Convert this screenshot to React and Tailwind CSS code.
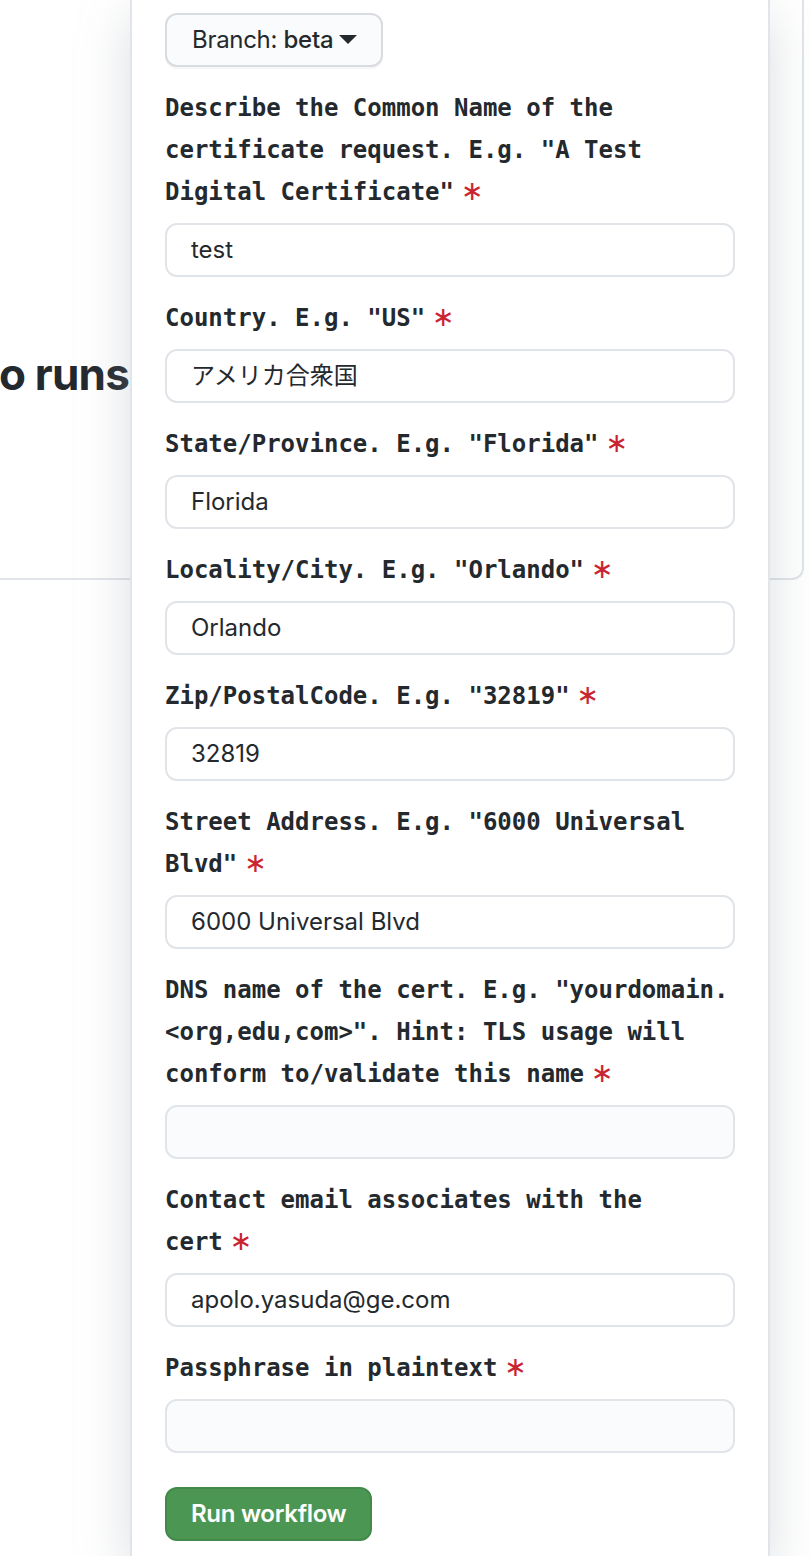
import React from 'react';

const fields = [
  { lines: ['Describe the Common Name of the', 'certificate request. E.g. "A Test', 'Digital Certificate"'], value: 'test' },
  { lines: ['Country. E.g. "US"'], value: 'アメリカ合衆国' },
  { lines: ['State/Province. E.g. "Florida"'], value: 'Florida' },
  { lines: ['Locality/City. E.g. "Orlando"'], value: 'Orlando' },
  { lines: ['Zip/PostalCode. E.g. "32819"'], value: '32819' },
  { lines: ['Street Address. E.g. "6000 Universal', 'Blvd"'], value: '6000 Universal Blvd' },
  { lines: ['DNS name of the cert. E.g. "yourdomain.', '<org,edu,com>". Hint: TLS usage will', 'conform to/validate this name'], value: '' },
  { lines: ['Contact email associates with the', 'cert'], value: 'apolo.yasuda@ge.com' },
  { lines: ['Passphrase in plaintext'], value: '' },
];

const sans = "font-['Inter','Noto_Sans_CJK_JP',sans-serif]";

function Field({ lines, value }) {
  return (
    <div className="mb-[20px]">
      <label className="block font-['DejaVu_Sans_Mono',monospace] font-bold text-[24px] leading-[42px] text-[#24292e] mb-[10px] whitespace-pre">
        {lines.map((line, i) => (
          <div key={i} className="flex items-center">
            <span>{line}</span>
            {i === lines.length - 1 && (
              <span className="ml-[7px] text-[#cb2431] text-[27px] leading-none font-normal font-['DejaVu_Sans',sans-serif] -mt-[3px]">∗</span>
            )}
          </div>
        ))}
      </label>
      <div
        className={`h-[54px] rounded-[12px] border-2 border-[#e1e4e8] px-[24px] flex items-center ${sans} text-[24px] text-[#24292e] ${value ? 'bg-white' : 'bg-[#fafbfc]'}`}
      >
        {value}
      </div>
    </div>
  );
}

export default function App() {
  return (
    <div className="relative w-[810px] h-[1556px] bg-white overflow-hidden">
      {/* page behind the dropdown */}
      <div className="w-[804px] h-[580px] border-r-2 border-b-2 border-[#e1e4e8] rounded-br-[12px] flex items-center overflow-hidden">
        <div className="w-[129px] flex justify-end overflow-hidden pt-[170px]">
          <span className={`${sans} font-bold text-[44px] text-[#24292e] whitespace-nowrap tracking-[-0.8px]`}>
            o runs
          </span>
        </div>
      </div>

      {/* run workflow dropdown */}
      <div className="absolute left-[130px] top-0 w-[640px] h-full bg-white border-x-2 border-[#e1e4e8] shadow-[0_16px_48px_rgba(149,157,165,0.35)] px-[33px] pt-[13px]">
        <button className={`h-[54px] pl-[25px] pr-[24px] rounded-[12px] border-2 border-[#d8dbdf] bg-[#fafbfc] shadow-[0_2px_0_rgba(27,31,35,0.04)] flex items-center gap-[6px] ${sans} text-[24px] text-[#24292e] tracking-[-0.3px] mb-[20px]`}>
          <span>
            Branch: <span className="font-medium">beta</span>
          </span>
          <svg width="18" height="10" viewBox="0 0 18 10">
            <path d="M0 0h18L9 9z" fill="#24292e" />
          </svg>
        </button>

        {fields.map(f => (
          <Field key={f.lines[0]} lines={f.lines} value={f.value} />
        ))}

        <button className={`mt-[14px] h-[54px] px-[24px] rounded-[12px] border-2 border-[#438a4a] bg-[#4c9653] ${sans} font-semibold text-[24px] tracking-[-0.3px] text-white`}>
          Run workflow
        </button>
      </div>
    </div>
  );
}
